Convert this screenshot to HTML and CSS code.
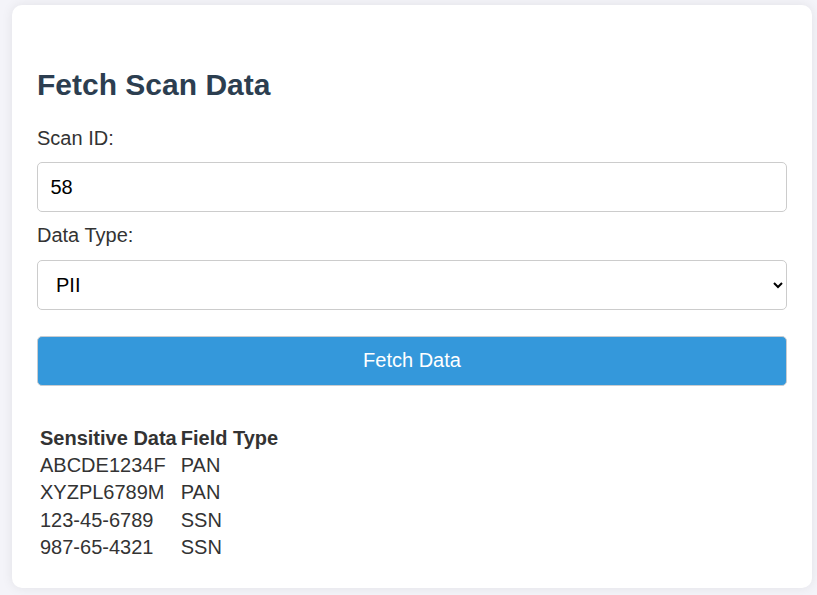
FILE: index.html
```html
<!DOCTYPE html>
<html lang="en">
<head>
<meta charset="utf-8">
<title>Fetch Scan Data</title>
<link rel="stylesheet" href="styles.css">
</head>
<body>
<div class="card">
  <h2 class="title">Fetch Scan Data</h2>
  <label class="label" for="scanId">Scan ID:</label>
  <input class="field" id="scanId" type="text" value="58">
  <label class="label" for="dataType">Data Type:</label>
  <select class="field select" id="dataType">
    <option>PII</option>
    <option>PCI</option>
  </select>
  <button class="btn" type="button">Fetch Data</button>
  <div class="results">
    <table class="data-table">
      <thead>
        <tr><th>Sensitive Data</th><th>Field Type</th></tr>
      </thead>
      <tbody>
        <tr><td>ABCDE1234F</td><td>PAN</td></tr>
        <tr><td>XYZPL6789M</td><td>PAN</td></tr>
        <tr><td>123-45-6789</td><td>SSN</td></tr>
        <tr><td>987-65-4321</td><td>SSN</td></tr>
      </tbody>
    </table>
  </div>
</div>
</body>
</html>
```
FILE: styles.css
```css
html, body {
  margin: 0;
  padding: 0;
}
body {
  background: #f4f4f9;
  font-family: "Liberation Sans", Arial, sans-serif;
  font-size: 20px;
  color: #333;
  padding: 5px 5px 7px 12px;
}
.card {
  width: 800px;
  box-sizing: border-box;
  background: #fff;
  border-radius: 10px;
  box-shadow: 0 0 12px rgba(0, 0, 0, 0.08);
  padding: 37.5px 25px 26px;
}
.title {
  font-size: 30px;
  font-weight: bold;
  color: #2c3e50;
  margin: 25px 0 25px;
  line-height: normal;
}
.label {
  display: block;
  margin-bottom: 12.5px;
  line-height: 23px;
}
.field {
  display: block;
  width: 100%;
  box-sizing: border-box;
  height: 50px;
  padding: 0 12.5px;
  font-family: "Liberation Sans", Arial, sans-serif;
  font-size: 20px;
  color: #000;
  border: 1px solid #ccc;
  border-radius: 5px;
  background: #fff;
  margin: 0 0 12px;
}
.select {
  padding-left: 14px;
  margin-bottom: 26px;
}
.btn {
  display: block;
  width: 100%;
  height: 50px;
  border: 1px solid #c8ccd0;
  border-radius: 5px;
  background: #3498db;
  color: #fff;
  font-family: "Liberation Sans", Arial, sans-serif;
  font-size: 20px;
  cursor: pointer;
}
.results {
  margin-top: 38px;
}
.data-table {
  font-size: 20px;
  line-height: 23.35px;
  color: #333;
}
.data-table th {
  text-align: left;
  font-weight: bold;
}
```
